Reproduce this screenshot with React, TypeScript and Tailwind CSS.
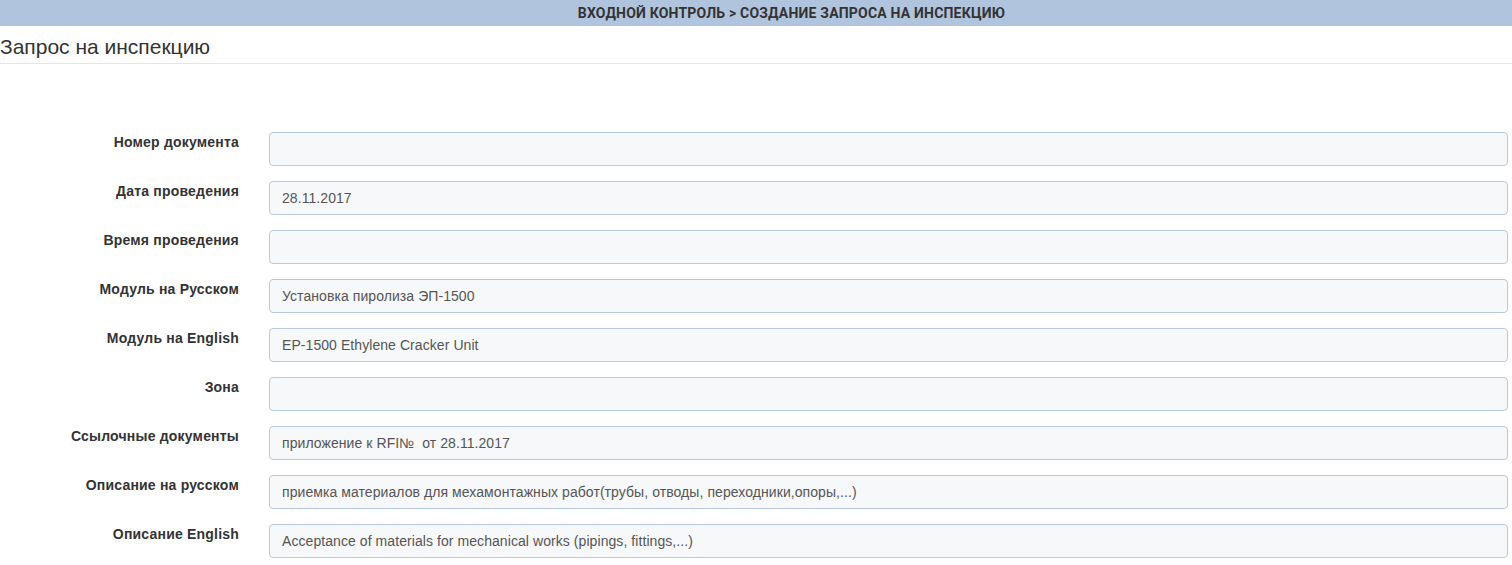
import React from "react"

type Field = {
  label: string
  value: string
}

const fields: Field[] = [
  { label: "Номер документа", value: "" },
  { label: "Дата проведения", value: "28.11.2017" },
  { label: "Время проведения", value: "" },
  { label: "Модуль на Русском", value: "Установка пиролиза ЭП-1500" },
  { label: "Модуль на English", value: "EP-1500 Ethylene Cracker Unit" },
  { label: "Зона", value: "" },
  { label: "Ссылочные документы", value: "приложение к RFI№  от 28.11.2017" },
  {
    label: "Описание на русском",
    value: "приемка материалов для мехамонтажных работ(трубы, отводы, переходники,опоры,...)",
  },
  { label: "Описание English", value: "Acceptance of materials for mechanical works (pipings, fittings,...)" },
]

function FormRow({ field }: { field: Field }) {
  return (
    <div className="flex items-start mb-[15px]">
      <label className="w-[239px] shrink-0 text-right text-[14px] leading-[20px] font-bold text-[#333] tracking-[0.2px]">
        {field.label}
      </label>
      <div className="ml-[30px] mr-[4px] flex-1">
        <input
          readOnly
          value={field.value}
          className="w-full h-[34px] px-[12px] rounded-[4px] border border-[#b7c9df] bg-[#f7f8fa] text-[14px] text-[#555] tracking-[0.07px] outline-none"
        />
      </div>
    </div>
  )
}

export default function App() {
  return (
    <div className="min-h-[565px] bg-white font-['Liberation_Sans',Arial,sans-serif]">
      {/* Breadcrumb bar */}
      <div className="h-[26px] bg-[#b0c4de] flex items-center justify-center pl-[71px]">
        <span className="font-['Roboto',sans-serif] font-bold text-[14px] uppercase text-[#333] tracking-[0.2px]">
          Входной контроль &gt; Создание запроса на инспекцию
        </span>
      </div>

      {/* Page heading */}
      <div className="border-b border-[#e5e5e5] pt-[10px] pb-[5px]">
        <h1 className="text-[21px] leading-[22px] text-[#333] font-normal">Запрос на инспекцию</h1>
      </div>

      {/* Request form */}
      <form className="pt-[68px]">
        {fields.map((f) => (
          <FormRow key={f.label} field={f} />
        ))}
      </form>
    </div>
  )
}
